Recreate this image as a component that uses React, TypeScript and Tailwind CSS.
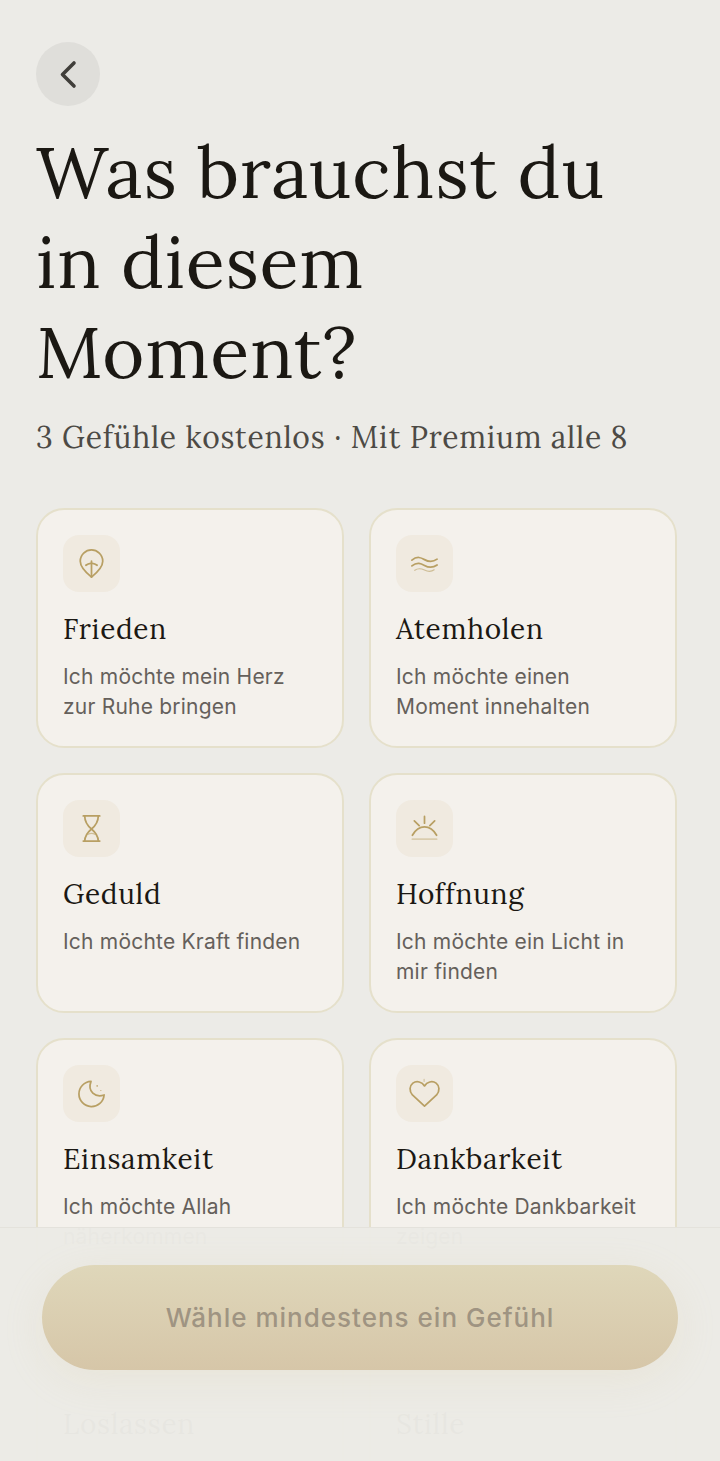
import React, { useState } from 'react';

interface Feeling {
  id: string;
  title: string;
  text?: string;
  icon: React.ReactNode;
}

const feelings: Feeling[] = [
  {
    id: 'frieden',
    title: 'Frieden',
    text: 'Ich möchte mein Herz zur Ruhe bringen',
    icon: (
      <>
        <path d="M16 30C10.5 25.5 4.4 20 4.4 13.6C4.4 7 10 2 16 2S27.6 7 27.6 13.6C27.6 20 21.5 25.5 16 30Z" />
        <path d="M16 13.5V30M10.2 17.8C12 16.2 14 15.8 16 15.5C18 15.8 20 16.2 21.8 17.8" />
      </>
    ),
  },
  {
    id: 'atemholen',
    title: 'Atemholen',
    text: 'Ich möchte einen Moment innehalten',
    icon: (
      <>
        <path d="M3 12.5C8.5 8 12.5 10 16 12S23.5 15.5 29 11.5" />
        <path d="M3 18.5C8.5 14 12.5 16 16 18S23.5 21.5 29 17.5" />
        <path d="M6 23C10 20 13 21.3 16 22.8S22 25.5 26 22.5" strokeWidth="1.2" opacity="0.6" />
      </>
    ),
  },
  {
    id: 'geduld',
    title: 'Geduld',
    text: 'Ich möchte Kraft finden',
    icon: (
      <>
        <path d="M7.5 3H24.5M7.5 29H24.5" />
        <path d="M9 3C9 10 12.5 13.5 16 16.5C19.5 19.5 23 23 23 29" />
        <path d="M23 3C23 10 19.5 13.5 16 16.5C12.5 19.5 9 23 9 29" />
        <path d="M12.5 22Q16 20 19.5 22" strokeWidth="1.2" opacity="0.6" />
      </>
    ),
  },
  {
    id: 'hoffnung',
    title: 'Hoffnung',
    text: 'Ich möchte ein Licht in mir finden',
    icon: (
      <>
        <path d="M3.5 23C10 11.5 22 11.5 28.5 23" />
        <path d="M16 3.5V10.5M5.5 8.2L10.5 13M26.5 8.2L21.5 13" />
        <path d="M3.5 27H28.5" opacity="0.4" />
      </>
    ),
  },
  {
    id: 'einsamkeit',
    title: 'Einsamkeit',
    text: 'Ich möchte Allah näherkommen',
    icon: (
      <>
        <path d="M15.5 3.5A13 13 0 1 0 29 17.5C20 20.5 11.5 14 15.5 3.5Z" />
        <circle cx="21.7" cy="8.2" r="0.4" strokeWidth="1" opacity="0.7" />
        <circle cx="25.5" cy="13" r="0.2" strokeWidth="1" opacity="0.4" />
      </>
    ),
  },
  {
    id: 'dankbarkeit',
    title: 'Dankbarkeit',
    text: 'Ich möchte Dankbarkeit zeigen',
    icon: (
      <>
        <path d="M16 29L3.5 17.5C0 13.5 0.5 8 4 5.3C8 2.5 13.5 4 16 8.2C18.5 4 24 2.5 28 5.3C31.5 8 32 13.5 28.5 17.5Z" />
        <path d="M15.6 1.5V3.5" strokeWidth="1.2" opacity="0.5" />
      </>
    ),
  },
  { id: 'loslassen', title: 'Loslassen', icon: <path d="M5 20C11 8 21 8 27 20" /> },
  { id: 'stille', title: 'Stille', icon: <circle cx="16" cy="16" r="11" /> },
];

interface FeelingCardProps {
  feeling: Feeling;
  selected: boolean;
  onToggle: (id: string) => void;
}

function FeelingCard({ feeling, selected, onToggle }: FeelingCardProps) {
  return (
    <button
      type="button"
      aria-pressed={selected}
      onClick={() => onToggle(feeling.id)}
      className={`flex flex-col items-start rounded-[28px] border-2 bg-[#f4f1ec] px-[25px] pt-[25px] pb-5 text-left ${
        selected ? 'border-[#b79b5b]' : 'border-[#e5e0cb]'
      }`}
    >
      <span className="flex size-[57px] items-center justify-center rounded-2xl bg-[#f0eae0]">
        <svg
          viewBox="0 0 32 32"
          className="size-[31px] text-[#b89f63]"
          fill="none"
          stroke="currentColor"
          strokeWidth="1.8"
          strokeLinecap="round"
          strokeLinejoin="round"
          aria-hidden="true"
        >
          {feeling.icon}
        </svg>
      </span>
      <span className="mt-[17px] font-[Lora,serif] text-[28px] leading-[40px] tracking-wide text-[#1b1813]">
        {feeling.title}
      </span>
      {feeling.text && (
        <span className="mt-[13px] font-[Inter,sans-serif] text-[21px] leading-[30px] tracking-[0.01em] text-[#65605b]">
          {feeling.text}
        </span>
      )}
    </button>
  );
}

export default function App() {
  const [selected, setSelected] = useState<string[]>([]);

  const toggle = (id: string) => {
    setSelected(prev => (prev.includes(id) ? prev.filter(item => item !== id) : [...prev, id]));
  };

  return (
    <div className="relative h-screen overflow-hidden bg-[#ecebe7]">
      <main className="h-full overflow-y-auto pt-[42px] pr-[43px] pl-9 [scrollbar-width:none]">
        <button
          type="button"
          aria-label="Zurück"
          className="flex size-16 items-center justify-center rounded-full bg-[#dfdeda]"
        >
          <svg
            viewBox="0 0 32 32"
            className="size-8"
            fill="none"
            stroke="#403e3a"
            strokeWidth="3.6"
            strokeLinecap="round"
            strokeLinejoin="round"
            aria-hidden="true"
          >
            <path d="M22 5L10.5 16.5L22 28" />
          </svg>
        </button>

        <h1 className="mt-[21px] max-w-[600px] font-[Lora,serif] text-[72px] leading-[90px] tracking-[0.01em] text-[#1b1813]">
          Was brauchst du in diesem Moment?
        </h1>
        <p className="mt-[18px] font-[Lora,serif] text-[30px] leading-[44px] tracking-wide text-[#4d4a45]">
          3 Gefühle kostenlos · Mit Premium alle 8
        </p>

        <div className="mt-[49px] grid auto-rows-[minmax(240px,auto)] grid-cols-2 gap-[25px]">
          {feelings.map(feeling => (
            <FeelingCard
              key={feeling.id}
              feeling={feeling}
              selected={selected.includes(feeling.id)}
              onToggle={toggle}
            />
          ))}
        </div>
      </main>

      {/* Sticky action bar, the list shines through slightly */}
      <footer className="absolute inset-x-0 bottom-0 border-t border-[#e4e2dc] bg-[#ecebe6]/98 px-[42px] pt-[37px] pb-[91px]">
        <button
          type="button"
          disabled={selected.length === 0}
          className="h-[105px] w-full rounded-full bg-linear-to-b from-[#dfd7ba] to-[#d6c6a8] font-[Inter,sans-serif] text-[26px] font-medium tracking-[1px] text-[#9f9482] shadow-[0_10px_40px_rgba(220,200,150,0.16)]"
        >
          Wähle mindestens ein Gefühl
        </button>
      </footer>
    </div>
  );
}
